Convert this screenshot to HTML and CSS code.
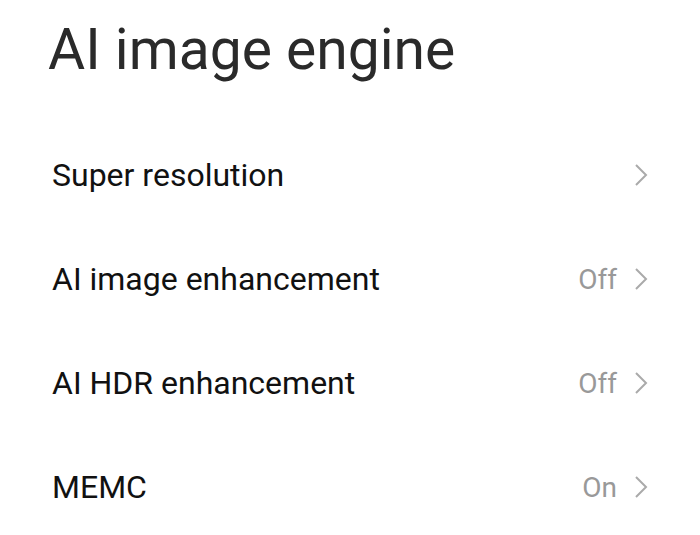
FILE: index.html
```html
<!DOCTYPE html>
<html lang="en">

<head>
  <meta charset="UTF-8">
  <meta name="viewport" content="width=device-width, initial-scale=1.0">
  <title>AI image engine</title>

  <link rel="stylesheet" href="styles.css">
</head>

<body>
  <div class="page">
    <h1 class="title">AI image engine</h1>

    <div class="list">
      <div class="row">
        <span class="label">Super resolution</span>
        <span class="right">
          <svg class="chevron" viewBox="0 0 14 24"><path d="M2 2 L12 12 L2 22" /></svg>
        </span>
      </div>
      <div class="row">
        <span class="label">AI image enhancement</span>
        <span class="right">
          <span class="value">Off</span>
          <svg class="chevron" viewBox="0 0 14 24"><path d="M2 2 L12 12 L2 22" /></svg>
        </span>
      </div>
      <div class="row">
        <span class="label">AI HDR enhancement</span>
        <span class="right">
          <span class="value">Off</span>
          <svg class="chevron" viewBox="0 0 14 24"><path d="M2 2 L12 12 L2 22" /></svg>
        </span>
      </div>
      <div class="row">
        <span class="label">MEMC</span>
        <span class="right">
          <span class="value">On</span>
          <svg class="chevron" viewBox="0 0 14 24"><path d="M2 2 L12 12 L2 22" /></svg>
        </span>
      </div>
    </div>
  </div>
</body>

</html>
```

FILE: styles.css
```css
body {
  margin: 0;
  background-color: #fff;
  font-family: Roboto, "Noto Sans", sans-serif;
}

.page {
  padding: 0 52px 0 52px;
}

.title {
  margin: 0 0 0 -4px;
  padding-top: 14px;
  height: 109px;
  font-size: 57px;
  font-weight: 400;
  color: #2a2a2a;
  line-height: 72px;
}

.list {
  display: flex;
  flex-direction: column;
}

.row {
  height: 104px;
  display: flex;
  align-items: center;
  justify-content: space-between;
}

.label {
  font-size: 32px;
  color: #111;
}

.right {
  display: flex;
  align-items: center;
  gap: 17px;
}

.value {
  font-size: 28px;
  color: #999;
}

.chevron {
  width: 14px;
  height: 24px;
  fill: none;
  stroke: #aaa;
  stroke-width: 2;
}
```
